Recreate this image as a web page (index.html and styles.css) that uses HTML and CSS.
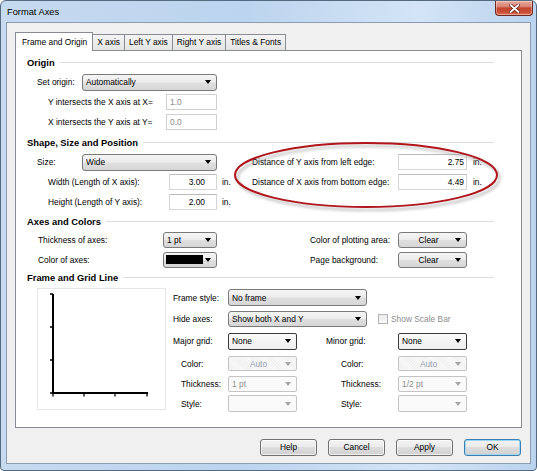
FILE: index.html
```html
<!DOCTYPE html>
<html>
<head>
<meta charset="utf-8">
<title>Format Axes</title>
<link rel="stylesheet" href="styles.css">
</head>
<body>
<div class="window">
  <div class="titlebar">
    <span class="title">Format Axes</span>
    <div class="close">
      <svg width="11" height="9" viewBox="0 0 11 9"><path d="M1.5 1 L9.5 8 M9.5 1 L1.5 8" stroke="#5a1a14" stroke-width="3.2" stroke-linecap="round"/><path d="M1.5 1 L9.5 8 M9.5 1 L1.5 8" stroke="#fff" stroke-width="1.8" stroke-linecap="round"/></svg>
    </div>
  </div>
  <div class="client">
    <div class="tabs">
      <div class="tab active">Frame and Origin</div>
      <div class="tab">X axis</div>
      <div class="tab">Left Y axis</div>
      <div class="tab">Right Y axis</div>
      <div class="tab">Titles &amp; Fonts</div>
    </div>
    <div class="panel">
      <div class="heading first"><span>Origin</span></div>
      <div class="row">
        <span class="lbl la">Set origin:</span>
        <div class="sel w135"><span class="val">Automatically</span><i class="arr"></i></div>
      </div>
      <div class="row">
        <span class="lbl lb">Y intersects the X axis at X=</span>
        <div class="num dis w51">1.0</div>
      </div>
      <div class="row">
        <span class="lbl lb">X intersects the Y axis at Y=</span>
        <div class="num dis w51">0.0</div>
      </div>

      <div class="heading"><span>Shape, Size and Position</span></div>
      <div class="row">
        <div class="half">
          <span class="lbl la">Size:</span>
          <div class="sel w135"><span class="val">Wide</span><i class="arr"></i></div>
        </div>
        <span class="lbl le">Distance of Y axis from left edge:</span>
        <div class="num w69">2.75</div>
        <span class="unit ur">in.</span>
      </div>
      <div class="row">
        <div class="half">
          <span class="lbl lc">Width (Length of X axis):</span>
          <div class="num w48">3.00</div>
          <span class="unit">in.</span>
        </div>
        <span class="lbl le">Distance of X axis from bottom edge:</span>
        <div class="num w69">4.49</div>
        <span class="unit ur">in.</span>
      </div>
      <div class="row">
        <div class="half">
          <span class="lbl lc">Height (Length of Y axis):</span>
          <div class="num w48">2.00</div>
          <span class="unit">in.</span>
        </div>
      </div>

      <div class="heading h18"><span>Axes and Colors</span></div>
      <div class="row">
        <div class="half">
          <span class="lbl ld">Thickness of axes:</span>
          <div class="sel w54 h16"><span class="val">1 pt</span><i class="arr"></i></div>
        </div>
        <span class="lbl lf">Color of plotting area:</span>
        <div class="sel w69 h16"><span class="val center">Clear</span><i class="arr"></i></div>
      </div>
      <div class="row r19">
        <div class="half">
          <span class="lbl ld">Color of axes:</span>
          <div class="sel w54 h16"><span class="swatch"></span><span class="val"></span><i class="arr"></i></div>
        </div>
        <span class="lbl lf">Page background:</span>
        <div class="sel w69 h16"><span class="val center">Clear</span><i class="arr"></i></div>
      </div>

      <div class="heading h17"><span>Frame and Grid Line</span></div>
      <div class="frame">
        <div class="preview">
          <svg width="127" height="120" viewBox="0 0 127 120">
            <path d="M15 5 V104 H110" fill="none" stroke="#000" stroke-width="2"/>
            <path d="M12 5 H15 M12 38 H15 M12 71 H15 M12 104 H15 M15 104 V107.5 M46 104 V107.5 M77 104 V107.5 M109 104 V107.5" fill="none" stroke="#000" stroke-width="1.3"/>
          </svg>
        </div>
        <div class="fcontrols">
          <div class="frow f21">
            <span class="lbl lg">Frame style:</span>
            <div class="sel w139"><span class="val">No frame</span><i class="arr"></i></div>
          </div>
          <div class="frow f21">
            <span class="lbl lg">Hide axes:</span>
            <div class="sel w139 h16"><span class="val">Show both X and Y</span><i class="arr"></i></div>
            <span class="check"></span>
            <span class="checklbl">Show Scale Bar</span>
          </div>
          <div class="frow f24">
            <span class="lbl lg">Major grid:</span>
            <div class="sel dark w69"><span class="val">None</span><i class="arr"></i></div>
            <span class="lbl lh">Minor grid:</span>
            <div class="sel dark w69"><span class="val">None</span><i class="arr"></i></div>
          </div>
          <div class="frow f21">
            <span class="lbl li">Color:</span>
            <div class="sel off auto w69 h15"><span class="val center">Auto</span><i class="arr"></i></div>
            <span class="lbl lj">Color:</span>
            <div class="sel off auto w69 h15"><span class="val center">Auto</span><i class="arr"></i></div>
          </div>
          <div class="frow f20">
            <span class="lbl li">Thickness:</span>
            <div class="sel off w69 h16"><span class="val">1 pt</span><i class="arr"></i></div>
            <span class="lbl lj">Thickness:</span>
            <div class="sel off w69 h16"><span class="val">1/2 pt</span><i class="arr"></i></div>
          </div>
          <div class="frow f19">
            <span class="lbl li">Style:</span>
            <div class="sel off w69 h17"><span class="val"></span><i class="arr"></i></div>
            <span class="lbl lj">Style:</span>
            <div class="sel off w69 h17"><span class="val"></span><i class="arr"></i></div>
          </div>
        </div>
      </div>

      <svg class="mark" width="272" height="78" viewBox="0 0 272 78">
        <defs>
          <filter id="blur" x="-10%" y="-40%" width="120%" height="180%"><feGaussianBlur stdDeviation="1.4"/></filter>
        </defs>
        <ellipse cx="136.5" cy="38" rx="131" ry="32" fill="none" stroke="#8c8c8c" stroke-width="2.2" opacity="0.55" filter="url(#blur)"/>
        <ellipse cx="134" cy="35" rx="131" ry="32" fill="none" stroke="#b0161c" stroke-width="2"/>
      </svg>
    </div>
    <div class="buttons">
      <div class="btn">Help</div>
      <div class="btn">Cancel</div>
      <div class="btn">Apply</div>
      <div class="btn default">OK</div>
    </div>
  </div>
</div>
</body>
</html>
```
FILE: styles.css
```css
* { box-sizing: border-box; }
html, body { margin: 0; padding: 0; background: #fff; }
body {
  font-family: "Liberation Sans", Arial, sans-serif;
  font-size: 8.4px;
  color: #000;
}
.window {
  width: 537px;
  height: 471px;
  border: 1px solid #55697f;
  border-radius: 6px 6px 4px 4px;
  background: linear-gradient(90deg, #c6daf0 0%, #bcd4ee 45%, #d3e4f6 78%, #bbd3ee 100%);
  display: flex;
  flex-direction: column;
  overflow: hidden;
}
.titlebar {
  height: 21px;
  flex: none;
  display: flex;
  justify-content: space-between;
  align-items: flex-start;
  padding: 0 3px 0 6px;
}
.title {
  font-size: 9.3px;
  line-height: 22px;
  color: #000;
}
.close {
  width: 38px;
  height: 15px;
  margin-top: 0;
  border: 1px solid #6e2a22;
  border-top: none;
  border-radius: 0 0 4px 4px;
  background: linear-gradient(#e8aa9d 0%, #d88373 40%, #c4452e 50%, #c94d35 80%, #dd7a5e 100%);
  display: flex;
  align-items: center;
  justify-content: center;
  box-shadow: inset 0 0 0 1px rgba(255,255,255,0.35);
}
.client {
  flex: 1;
  margin: 0 5px 6px 5px;
  border: 1px solid #8d9cae;
  background: #f0f0f0;
  padding: 9px 8px 7px 8px;
  display: flex;
  flex-direction: column;
}
.tabs {
  height: 18px;
  flex: none;
  display: flex;
  align-items: flex-end;
  position: relative;
  z-index: 2;
}
.tab {
  height: 16px;
  line-height: 15px;
  padding: 0 4px;
  margin-left: -1px;
  border: 1px solid #898c95;
  border-bottom: none;
  background: linear-gradient(#f4f4f4, #e4e4e4);
  white-space: nowrap;
  position: relative;
}
.tab.active {
  height: 19px;
  line-height: 18px;
  margin-left: 0;
  margin-bottom: -1px;
  padding: 0 5px 0 6px;
  background: #fff;
  z-index: 3;
}
.panel {
  height: 378px;
  flex: none;
  border: 1px solid #898c95;
  background: #fff;
  position: relative;
}
.heading {
  display: flex;
  align-items: center;
  height: 20px;
  padding: 0 27px 0 11px;
  font-weight: bold;
  font-size: 9.4px;
  white-space: nowrap;
}
.heading::after {
  content: "";
  flex: 1;
  height: 1px;
  margin-left: 5px;
  background: #d5dfe5;
}
.heading.first { margin-top: 1px; }
.heading.h18 { height: 18px; }
.heading.h17 { height: 17px; }
.row {
  display: flex;
  align-items: center;
  height: 20px;
}
.row.r19 { height: 19px; }
.half {
  width: 220px;
  flex: none;
  display: flex;
  align-items: center;
}
.lbl { flex: none; white-space: nowrap; }
.la { margin-left: 21px; width: 45px; }
.lb { margin-left: 32px; width: 118px; }
.lc { margin-left: 32px; width: 121px; }
.ld { margin-left: 22px; width: 125px; }
.le { margin-left: 16px; width: 146px; }
.lf { margin-left: 74px; width: 88px; }
.lg { width: 55px; }
.lh { margin-left: 29px; width: 72px; }
.li { margin-left: 8px; width: 47px; }
.lj { margin-left: 44px; width: 57px; }
.unit { margin-left: 5px; }
.unit.ur { margin-left: 6px; }

.sel {
  flex: none;
  height: 17px;
  display: flex;
  align-items: center;
  padding: 0 5px 0 3px;
  border: 1px solid #7a7a7a;
  border-radius: 3px;
  background: linear-gradient(#f5f5f5 0%, #ececec 48%, #dfdfdf 52%, #d6d6d6 100%);
}
.sel .val { flex: 1; white-space: nowrap; overflow: hidden; }
.sel .val.center { text-align: center; }
.arr {
  flex: none;
  width: 0;
  height: 0;
  border-left: 3.5px solid transparent;
  border-right: 3.5px solid transparent;
  border-top: 4px solid #000;
}
.swatch {
  flex: none;
  width: 37px;
  height: 9px;
  margin-left: -1px;
  background: #000;
}
.sel.dark {
  border: 1px solid #3a3a3a;
  border-radius: 2px;
  background: linear-gradient(#fbfbfb, #eeeeee);
}
.sel.off {
  border: 1px solid #c4c4c4;
  border-radius: 2px;
  background: #fafafa;
  color: #8e8e8e;
}
.sel.off .arr { border-top-color: #a6a6a6; }
.sel.auto {
  background: repeating-linear-gradient(45deg, #f1f1f1 0 1px, #f9f9f9 1px 2px);
  color: #9a9fb5;
}
.w135 { width: 135px; }
.w139 { width: 139px; }
.w69 { width: 69px; }
.w54 { width: 54px; }
.w51 { width: 51px; }
.w48 { width: 48px; }
.h15 { height: 15px; }
.h16 { height: 16px; }
.h17 { height: 17px; }

.num {
  flex: none;
  height: 16px;
  line-height: 14px;
  border: 1px solid #d6d6d6;
  border-top-color: #bdbdbd;
  background: #fff;
  text-align: right;
  padding-right: 2px;
}
.num.w48 { padding-right: 11px; }
.num.dis {
  text-align: left;
  padding-left: 3px;
  color: #8a8a8a;
  border-color: #d0d0d0;
}

.frame { display: flex; }
.preview {
  flex: none;
  margin: 2px 0 0 21px;
  width: 129px;
  height: 122px;
  border: 1px solid #e6e6e6;
}
.preview svg { display: block; }
.fcontrols {
  margin: 1px 0 0 7px;
  display: flex;
  flex-direction: column;
}
.frow { display: flex; align-items: center; }
.f19 { height: 19px; }
.f20 { height: 20px; }
.f21 { height: 21px; }
.f24 { height: 24px; }
.check {
  flex: none;
  width: 10px;
  height: 10px;
  margin-left: 11px;
  border: 1px solid #b4b4b4;
  background: linear-gradient(#ececec, #f8f8f8);
}
.checklbl {
  margin-left: 3px;
  color: #8d8d8d;
  white-space: nowrap;
}

.mark {
  position: absolute;
  left: 216px;
  top: 89px;
  pointer-events: none;
}

.buttons {
  flex: none;
  display: flex;
  justify-content: flex-end;
  gap: 11px;
  margin-top: 11px;
  padding-right: 1px;
  height: 17px;
}
.btn {
  width: 57px;
  height: 17px;
  line-height: 15px;
  text-align: center;
  border: 1px solid #707070;
  border-radius: 3px;
  background: linear-gradient(#f3f3f3 0%, #ebebeb 45%, #dddddd 50%, #d0d0d0 100%);
  box-shadow: inset 0 0 0 1px rgba(255,255,255,0.7);
}
.btn.default {
  border-color: #3c7fb1;
  box-shadow: inset 0 0 0 1px #9fd6f3;
}
```
